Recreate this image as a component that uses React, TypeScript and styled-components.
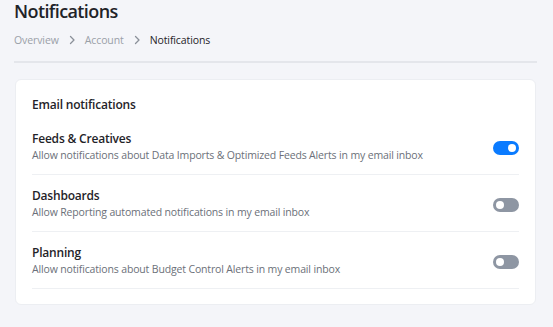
import React, { useState } from "react"
import styled, { createGlobalStyle } from "styled-components"

const GlobalStyle = createGlobalStyle`
  * { box-sizing: border-box; }
  body {
    margin: 0;
    background: #f4f5f9;
    font-family: "Open Sans", "Noto Sans", Arial, sans-serif;
    color: #1f2328;
  }
`

interface Setting {
  id: string
  title: string
  description: string
  enabled: boolean
}

const initialSettings: Setting[] = [
  {
    id: "feeds",
    title: "Feeds & Creatives",
    description: "Allow notifications about Data Imports & Optimized Feeds Alerts in my email inbox",
    enabled: true,
  },
  {
    id: "dashboards",
    title: "Dashboards",
    description: "Allow Reporting automated notifications in my email inbox",
    enabled: false,
  },
  {
    id: "planning",
    title: "Planning",
    description: "Allow notifications about Budget Control Alerts in my email inbox",
    enabled: false,
  },
]

const Chevron = () => (
  <svg width="8" height="10" viewBox="0 0 8 10" fill="none">
    <path d="M2.5 1.5 L6 5 L2.5 8.5" stroke="#8a9099" strokeWidth="1.3" strokeLinecap="round" strokeLinejoin="round" />
  </svg>
)

const App = () => {
  const [settings, setSettings] = useState(initialSettings)

  const toggle = (id: string) =>
    setSettings(s => s.map(item => (item.id === id ? { ...item, enabled: !item.enabled } : item)))

  return (
    <Page>
      <GlobalStyle />
      <Title>Notifications</Title>
      <Breadcrumbs>
        <Crumb>Overview</Crumb>
        <Chevron />
        <Crumb>Account</Crumb>
        <Chevron />
        <Crumb current>Notifications</Crumb>
      </Breadcrumbs>
      <Divider />
      <Card>
        <CardTitle>Email notifications</CardTitle>
        {settings.map(item => (
          <Row key={item.id}>
            <RowText>
              <RowTitle>{item.title}</RowTitle>
              <RowDescription>{item.description}</RowDescription>
            </RowText>
            <Switch on={item.enabled} onClick={() => toggle(item.id)} aria-pressed={item.enabled}>
              <Knob />
            </Switch>
          </Row>
        ))}
      </Card>
    </Page>
  )
}

export default App

const Page = styled.div`
  padding: 0 16px 20px 14px;
`

const Title = styled.h1`
  margin: 0;
  font-size: 18px;
  line-height: 22px;
  font-weight: 600;
  letter-spacing: -0.6px;
  color: #1f2328;
`

const Breadcrumbs = styled.nav`
  display: flex;
  align-items: center;
  gap: 9px;
  margin-top: 10px;
  height: 16px;
`

const Crumb = styled.span<{ current?: boolean }>`
  font-size: 10.5px;
  line-height: 16px;
  letter-spacing: -0.1px;
  color: ${p => (p.current ? "#1f2328" : "#9aa0a8")};
`

const Divider = styled.div`
  height: 2px;
  background: #e4e6eb;
  margin-top: 13px;
`

const Card = styled.section`
  margin: 16px 1px 0;
  background: #ffffff;
  border: 1px solid #eceef2;
  border-radius: 6px;
  padding: 16px 16px 15px;
`

const CardTitle = styled.h2`
  margin: 0 0 4px;
  font-size: 12px;
  line-height: 18px;
  font-weight: 600;
  letter-spacing: -0.2px;
  color: #1f2328;
`

const Row = styled.div`
  display: flex;
  align-items: center;
  justify-content: space-between;
  padding: 12px 0 11px;
  border-bottom: 1px solid #eef0f3;
`

const RowText = styled.div`
  display: flex;
  flex-direction: column;
`

const RowTitle = styled.div`
  font-size: 12px;
  line-height: 17px;
  font-weight: 600;
  letter-spacing: -0.2px;
  color: #1f2328;
`

const RowDescription = styled.div`
  font-size: 10.5px;
  line-height: 16px;
  letter-spacing: -0.15px;
  color: #6b7079;
`

const Switch = styled.button<{ on: boolean }>`
  display: flex;
  align-items: center;
  width: 26px;
  height: 14px;
  margin-top: 3px;
  padding: 0 3px;
  border: none;
  border-radius: 7px;
  background: ${p => (p.on ? "#0a7bff" : "#8e96a3")};
  justify-content: ${p => (p.on ? "flex-end" : "flex-start")};
  cursor: pointer;
  flex-shrink: 0;
`

const Knob = styled.span`
  width: 8px;
  height: 8px;
  border-radius: 50%;
  background: #ffffff;
`
